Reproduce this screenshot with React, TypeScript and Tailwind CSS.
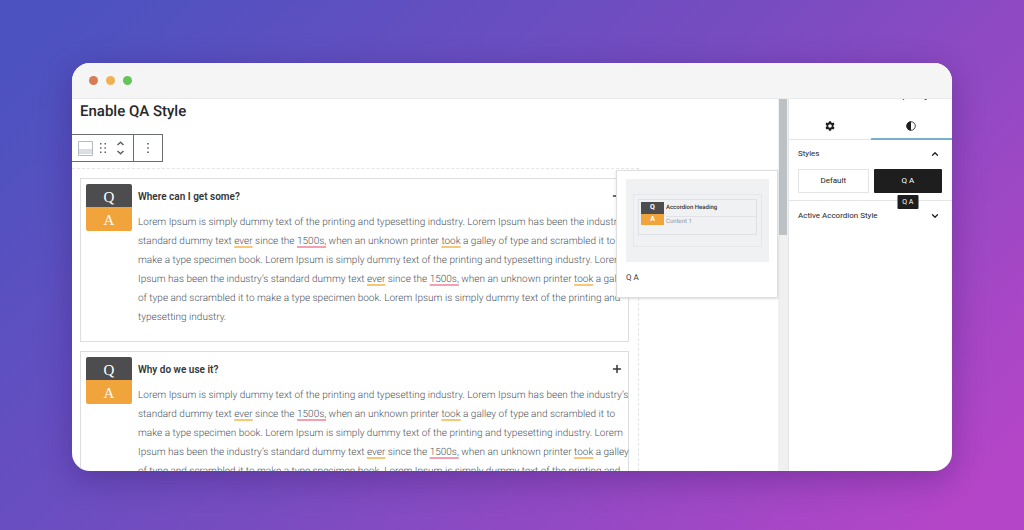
import { Fragment } from "react";
import { ChevronDown, ChevronUp, Minus, Plus } from "lucide-react";

// mark: "y" = style hint, "r" = spelling hint
type Piece = string | { text: string; mark: "y" | "r" };

const ever: Piece = { text: "ever", mark: "y" };
const took: Piece = { text: "took", mark: "y" };
const year: Piece = { text: "1500s,", mark: "r" };

const lines: Piece[][] = [
  ["Lorem Ipsum is simply dummy text of the printing and typesetting industry. Lorem Ipsum has been the industry’s"],
  ["standard dummy text ", ever, " since the ", year, " when an unknown printer ", took, " a galley of type and scrambled it to"],
  ["make a type specimen book. Lorem Ipsum is simply dummy text of the printing and typesetting industry. Lorem"],
  ["Ipsum has been the industry’s standard dummy text ", ever, " since the ", year, " when an unknown printer ", took, " a galley"],
  ["of type and scrambled it to make a type specimen book. Lorem Ipsum is simply dummy text of the printing and"],
  ["typesetting industry."],
];

const items = [
  { title: "Where can I get some?", open: true },
  { title: "Why do we use it?", open: false },
];

const markClass = {
  y: "underline decoration-[#f6c777] decoration-2 underline-offset-2 [text-decoration-skip-ink:none]",
  r: "underline decoration-[#f4a0b1] decoration-2 underline-offset-2 [text-decoration-skip-ink:none]",
};

function Body() {
  return (
    <p className="mt-[5px] whitespace-nowrap text-[10px] leading-[19px] font-light text-[#4b545d]">
      {lines.map((line, i) => (
        <Fragment key={i}>
          {line.map((piece, j) =>
            typeof piece === "string" ? (
              piece
            ) : (
              <span key={j} className={markClass[piece.mark]}>
                {piece.text}
              </span>
            )
          )}
          <br />
        </Fragment>
      ))}
    </p>
  );
}

function AccordionItem({ title, open }: { title: string; open: boolean }) {
  return (
    <section className="flex h-[164px] shrink-0 items-start gap-[6px] border border-[#dcdddf] p-[5px] pr-0">
      <div className="w-[46px] shrink-0 overflow-hidden rounded-[2px] text-center font-['Liberation_Serif',serif] text-[15px] leading-[29px] text-white">
        <div className="h-[23px] bg-[#4d4d50]">Q</div>
        <div className="h-[24px] bg-[#f1a43c]">A</div>
      </div>
      <div className="min-w-0 flex-1">
        <button className="flex h-[24px] w-full items-center justify-between pr-[5px] text-[10px] font-semibold text-[#33363a]">
          {title}
          {open ? <Minus size={12} strokeWidth={3} /> : <Plus size={12} strokeWidth={3} />}
        </button>
        <Body />
      </div>
    </section>
  );
}

function Toolbar() {
  return (
    <div className="mt-[11px] flex h-[28px] w-[91px] border border-l-0 border-[#6b6d75] text-[#5d6068]">
      <div className="flex flex-1 items-center border-r border-[#6b6d75] pl-[6px]">
        <button aria-label="Accordion block">
          <svg width="15" height="15" viewBox="0 0 15 15" fill="none" stroke="#b4bac2">
            <path d="M.5 .5h14v14H.5z" />
            <path d="M1 9h13M1 12h13" />
            <path d="M1 10.500h13" stroke="#dde0e4" strokeWidth="2" />
          </svg>
        </button>
        <button aria-label="Drag" className="ml-[6px]">
          <svg width="8" height="12" viewBox="0 0 8 12" fill="currentColor">
            <path d="M1 1h1.500v1.500H1zM5.500 1H7v1.500H5.500zM1 5.200h1.500v1.500H1zM5.500 5.200H7v1.500H5.500zM1 9.400h1.500v1.500H1zM5.500 9.400H7v1.500H5.500z" />
          </svg>
        </button>
        <button aria-label="Move" className="ml-[9px]">
          <svg width="9" height="14" viewBox="0 0 9 14" fill="none" stroke="currentColor" strokeWidth="1.500">
            <path d="M1.500 4l3-2.700 3 2.700M1.500 10l3 2.700 3-2.700" />
          </svg>
        </button>
      </div>
      <button aria-label="Options" className="flex w-[28px] items-center justify-center">
        <svg width="4" height="12" viewBox="0 0 4 12" fill="currentColor">
          <path d="M1.200 1h1.600v1.600H1.200zM1.200 5.200h1.600v1.600H1.200zM1.200 9.400h1.600V11H1.200z" />
        </svg>
      </button>
    </div>
  );
}

// Style preview shown while hovering a style button
function Preview() {
  return (
    <div className="absolute top-[71px] right-0 h-[128px] w-[162px] border border-[#dcdee0] bg-white pt-[8px] pr-[8px] pl-[9px] shadow-sm">
      <div className="h-[83px] bg-[#f0f1f3] px-[7px] pt-[15px]">
        <div className="h-[53px] border border-[#e6e7ea] p-[4px]">
          <div className="flex h-[36px] gap-[2px] border border-[#dfe1e4] pt-[2px] pl-[2px]">
            <div className="w-[23px] shrink-0 text-center text-[7px] leading-[11px] font-bold text-white">
              <div className="h-[12px] bg-[#4d4d50]">Q</div>
              <div className="h-[11px] bg-[#f1a43c]">A</div>
            </div>
            <div className="flex-1 text-[6px] whitespace-nowrap">
              <div className="h-[15px] border-b border-[#e0e2e5] leading-[12px] font-medium text-[#33363a]">Accordion Heading</div>
              <div className="leading-[10px] text-[#9297a0]">Content 1</div>
            </div>
          </div>
        </div>
      </div>
      <p className="mt-[10px] text-[8px] leading-[12px] text-[#33363b]">Q A</p>
    </div>
  );
}

function Sidebar() {
  return (
    <aside className="w-[164px] shrink-0 border-l border-[#e2e4e6] text-[8px] text-[#1e1e1e]">
      <div className="h-[3px] overflow-hidden">
        <p className="-mt-[9px] pr-[23px] text-right text-[10px] leading-[12px]">specify</p>
      </div>
      <div className="flex h-[38px]">
        <button aria-label="Settings" className="flex flex-1 items-center justify-center border-b border-[#e2e4e6] pt-[11px]">
          <svg width="10" height="10" viewBox="0 0 10 10">
            <path
              fill="currentColor"
              fillRule="evenodd"
              d="M4 .2h2l.3 1.300.9.500 1.300-.4 1 1.700-1 .9v1.600l1 .9-1 1.700-1.300-.4-.9.500L6 9.800H4l-.3-1.300-.9-.5-1.300.4-1-1.700 1-.9V4.200l-1-.9 1-1.700 1.300.4.900-.5zM5 3.200a1.800 1.800 0 1 0 0 3.600 1.800 1.800 0 0 0 0-3.600z"
            />
          </svg>
        </button>
        <button aria-label="Styles" className="flex flex-1 items-center justify-center border-b-2 border-[#78b0d0] pt-[11px]">
          <svg width="10" height="10" viewBox="0 0 10 10">
            <circle cx="5" cy="5" r="4.300" fill="none" stroke="currentColor" strokeWidth=".8" />
            <path d="M5 .5a4.500 4.500 0 0 0 0 9z" fill="currentColor" />
          </svg>
        </button>
      </div>
      <div className="h-[61px] border-b border-[#e2e4e6] pr-[10px] pl-[9px]">
        <button className="flex h-[29px] w-full items-center justify-between pr-[2px] pb-[2px]">
          Styles
          <ChevronUp size={10} strokeWidth={3} />
        </button>
        <div className="flex gap-[5px]">
          <button className="h-[24px] flex-1 border border-[#e2e4e6]">Default</button>
          <div className="relative flex-1">
            <button className="h-[24px] w-full rounded-[1px] bg-[#1e1e1e] text-white">Q A</button>
            <span role="tooltip" className="absolute top-[26px] left-1/2 h-[14px] w-[21px] -translate-x-1/2 rounded-[1px] bg-[#1e1e1e] text-center text-[7px] leading-[14px] text-white">
              Q A
            </span>
          </div>
        </div>
      </div>
      <button className="flex h-[30px] w-full items-center justify-between pr-[12px] pl-[9px]">
        Active Accordion Style
        <ChevronDown size={10} strokeWidth={3} />
      </button>
    </aside>
  );
}

export default function App() {
  return (
    <div className="flex h-screen bg-linear-[135deg,#4c52c0_5%,#784cc0_50%,#b545c8_95%] px-[72px] pt-[63px] pb-[59px] font-[Roboto,sans-serif] [text-rendering:geometricPrecision]">
      <div className="flex flex-1 flex-col overflow-hidden rounded-[18px] bg-white shadow-[0_8px_32px_rgba(40,10,80,0.3)]">
        {/* Window bar */}
        <div className="flex h-[36px] shrink-0 items-center gap-[8px] border-b border-[#ebebeb] bg-[#f5f5f5] px-[17px]">
          <span className="size-[9px] rounded-full bg-[#d67d54]" />
          <span className="size-[9px] rounded-full bg-[#efb154]" />
          <span className="size-[9px] rounded-full bg-[#62c659]" />
        </div>

        <div className="flex min-h-0 flex-1">
          {/* Editor canvas */}
          <main className="relative flex min-w-0 flex-1 flex-col">
            <h1 className="pl-[8px] text-[15px] leading-[24px] font-medium text-[#26282c]">Enable QA Style</h1>
            <Toolbar />
            <div className="mt-[6px] mr-[139px] flex min-h-0 flex-1 flex-col gap-[9px] overflow-hidden border-t border-r border-dashed border-[#e4e5e7] pt-[9px] pr-[9px] pl-[8px]">
              {items.map((item) => (
                <AccordionItem key={item.title} {...item} />
              ))}
            </div>
            <Preview />
          </main>

          {/* Scrollbar */}
          <div className="w-[10px] shrink-0 bg-[#f0f0f1] px-[1px]">
            <div className="h-[136px] bg-[#bbc1c5]" />
          </div>

          <Sidebar />
        </div>
      </div>
    </div>
  );
}
